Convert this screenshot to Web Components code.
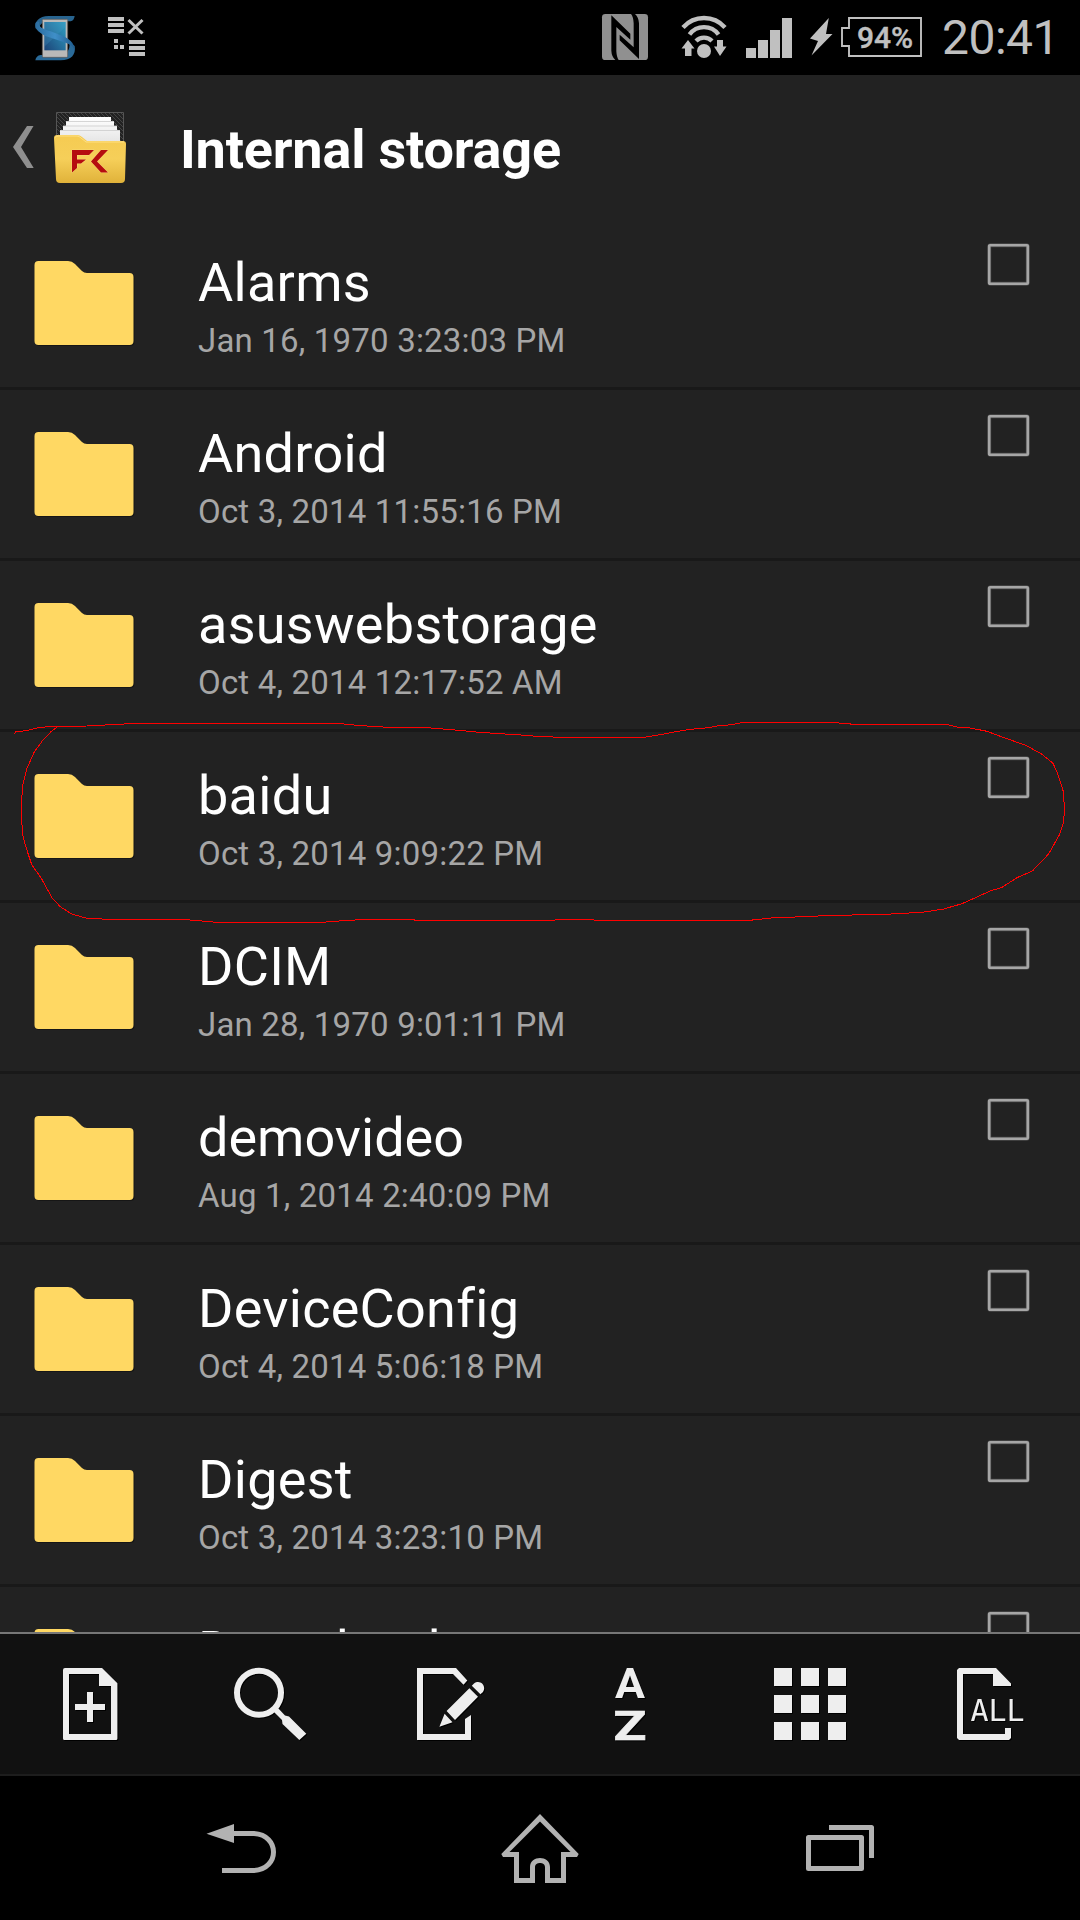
<!DOCTYPE html>
<html lang="en">
<head>
<meta charset="utf-8">
<title>Internal storage</title>
<style>
html, body { margin: 0; background: #000; }
body { width: 1080px; height: 1920px; overflow: hidden; font-family: Roboto, sans-serif; }
</style>
</head>
<body>
<file-manager-screen></file-manager-screen>
<script>
const define = (name, html, setup) => {
  const template = document.createElement('template');
  template.innerHTML = html;
  customElements.define(name, class extends HTMLElement {
    constructor() {
      super();
      this.attachShadow({ mode: 'open' }).append(template.content.cloneNode(true));
    }
    connectedCallback() { if (setup) setup(this, this.shadowRoot); }
  });
};

define('status-bar', `
<style>
:host { display: flex; height: 75px; background: #000; color: #c0c0c0; align-items: flex-start; }
svg { display: block; flex: none; }
.left { display: flex; padding: 10px 0 0 30px; }
.right { display: flex; margin-left: auto; padding-top: 8px; }
.battery { display: grid; width: 87px; height: 58px; margin-left: 6px; }
.battery > * { grid-area: 1 / 1; }
.battery span { margin: 15px 0 0 17px; font-size: 30px; font-weight: 500; line-height: 30px; white-space: nowrap; -webkit-text-stroke: .4px #c0c0c0; }
.clock { font-size: 48px; line-height: 60px; width: 153px; padding-left: 15px; box-sizing: border-box; white-space: nowrap; letter-spacing: -.5px; }
</style>
<div class="left">
<svg width="50" height="56" viewBox="0 0 150 168">
 <defs>
  <linearGradient id="b" x1="0" y1="0" x2="1" y2="0"><stop offset="0" stop-color="#2c6c9e"/><stop offset=".5" stop-color="#3f8fc8"/><stop offset="1" stop-color="#1e5a8c"/></linearGradient>
  <linearGradient id="s" x1="1" y1="0" x2="0" y2="1"><stop offset="0" stop-color="#2fa0c4"/><stop offset="1" stop-color="#1c4478"/></linearGradient>
 </defs>
 <path d="M134 18H56C26 18 14 36 16 54L28 66C24 46 36 34 60 34H122Q132 32 134 18Z" fill="#28648f"/>
 <path d="M16 151H92C124 151 138 134 134 108L118 96C122 122 108 135 86 135H32Q18 137 16 151Z" fill="#2a6a98"/>
 <rect x="37" y="28" width="76" height="114" rx="3" fill="#b9b9b9" stroke="#5c5450" stroke-width="2"/>
 <rect x="43" y="36" width="64" height="85" fill="url(#s)"/>
 <path d="M43 110L107 50V36H43Z" fill="#4a9cc8" opacity=".25"/>
 <path d="M16 44C18 62 32 72 58 82L100 96C124 104 136 112 134 132C136 104 126 90 98 78L62 64C38 56 24 52 28 36C18 34 16 38 16 44Z" fill="url(#b)"/>
</svg>
<svg width="80" height="56" viewBox="80 10 80 56" fill="#c0c0c0">
 <path d="M108 17h16v4h-16zM108 23h16v4h-16zM108 29h16v4h-16zM129 40h16v4h-16zM129 46h16v4h-16zM129 52h16v4h-16zM114 39h4v4h-4zM114 45h4v4h-4zM120 45h4v4h-4z"/>
 <path d="M128.500 20L142.500 33.500M142.500 20L128.500 33.500" stroke="#c0c0c0" stroke-width="3"/>
</svg>
</div>
<div class="right">
<svg width="58" height="58" viewBox="0 0 174 174">
 <rect x="18" y="18" width="138" height="138" rx="10" fill="#909090"/>
 <path d="M46 22L103 77V95L61 57V130Q62 148 68 156H58Q47 146 46 128Z"/>
 <path d="M129 153L71 97V80L113 118V46Q112 26 105 18H117Q128 28 129 46Z"/>
</svg>
<svg width="180" height="58" viewBox="654 8 180 58" fill="#c0c0c0">
 <g fill="none" stroke="#c0c0c0" stroke-width="4.300"><path d="M683 27.500A28 28 0 0 1 725 27.500M689.500 34.500A18 18 0 0 1 718.500 34.500M696 41A11 11 0 0 1 712 41"/></g>
 <circle cx="704" cy="51" r="7"/>
 <path d="M688 40L694.500 48.500H691.500V56H685V48.500H681.500ZM717 40H723V46.500H726.500L720 56L714 46.500H717Z"/>
 <path d="M746 48h10v10h-10zM758 40h10v18h-10zM770 30h10v28h-10zM782 18h10v40h-10z"/>
 <path d="M828.800 18L826 34H832.500L811.500 55.500L818 41L810 38.500Z"/>
</svg>
<div class="battery">
<svg width="87" height="58" viewBox="840 8 87 58"><path d="M849 18H921V56H849V46H842V28H849Z" fill="none" stroke="#c0c0c0" stroke-width="1.900"/></svg>
<span>94%</span></div>
<div class="clock">20:41</div>
</div>`);

define('title-bar', `
<style>
:host { display: flex; height: 144px; color: #fff; }
svg { display: block; flex: none; }
h1 { margin: 43px 0 0 42px; font-size: 54px; font-weight: 700; line-height: 64px; white-space: nowrap; letter-spacing: -.18px; }
</style>
<svg width="138" height="144" viewBox="0 75 138 144">
 <defs>
  <linearGradient id="f" x1="0" y1="0" x2="0" y2="1"><stop offset="0" stop-color="#f5cb52"/><stop offset=".5" stop-color="#f6cf59"/><stop offset="1" stop-color="#e0b23a"/></linearGradient>
  <linearGradient id="p" x1="0" y1="0" x2="0" y2="1"><stop offset="0" stop-color="#fff"/><stop offset="1" stop-color="#e2e2e2"/></linearGradient>
  <pattern id="w" width="4" height="4" patternUnits="userSpaceOnUse"><rect width="4" height="4" fill="#222"/><path d="M0 0L4 4" stroke="#444" stroke-width="1"/></pattern>
 </defs>
 <path d="M27 126H33.500L21 147L33.700 168H27L13 147Z" fill="#8f8f8f"/>
 <path d="M56.500 112.500H123.500V150H56.500Z" fill="url(#w)" stroke="#555"/>
 <path d="M69 117H111V121H114V126H117V130H120V145H60V130H63V126H66V121H69Z" fill="url(#p)"/>
 <path d="M66 121.500H114M63 126H117M60 130.500H120" stroke="#ccc" stroke-width=".8"/>
 <path d="M57 135H77Q80 135 82 137L87 141H123Q126 141 126 144L125 179Q125 183 121 183H60Q56 183 56 179L54 138Q54 135 57 135Z" fill="url(#f)"/>
 <path d="M55 137.500Q56 136 58 136H77Q79 136 81 138L86 142H124" fill="none" stroke="#ffe082" stroke-width="1"/>
 <path d="M72 150H94L89 155H77V159.500H86L81 163.500H77V168L72 172.500ZM101 150H108L97 161.500L108 172.500H101L91 161.500Z" fill="#b50d10" stroke="#f9dc7c" stroke-width=".8" paint-order="stroke"/>
</svg>
<h1><slot></slot></h1>`);

define('check-box', `
<style>
:host { display: block; width: 43px; height: 43px; }
svg { display: block; }
</style>
<svg width="43" height="43"><rect x="2.200" y="2.200" width="38.600" height="38.600" rx="1.500" fill="none" stroke="#666" stroke-width="4" opacity=".55"/><rect x="2.200" y="2.200" width="38.600" height="38.600" rx=".8" fill="none" stroke="#a6a6a6" stroke-width="2.600"/></svg>`);

define('file-row', `
<style>
:host { display: flex; height: 168px; flex: none; border-bottom: 3px solid #191919; }
.icon { flex: none; width: 104px; height: 90px; margin: 40px 0 0 32px; }
.text { display: flex; flex-direction: column; flex: 1; padding: 32px 0 0 62px; white-space: nowrap; }
.name { font-size: 54px; line-height: 64px; color: #fff; letter-spacing: .28px; }
:host([tight]) .name { letter-spacing: 0; }
.date { margin-top: 6px; font-size: 33px; line-height: 40px; color: #a6a6a6; letter-spacing: .19px; }
check-box { flex: none; margin: 23.500px 50px 0 0; }
</style>
<svg class="icon" viewBox="0 0 104 90">
 <path d="M6.500 2H36Q40 2 43 5L50 12Q52 14 55 14H97.500Q101.500 14 101.500 18V82Q101.500 86 97.500 86H6.500Q2.500 86 2.500 82V6Q2.500 2 6.500 2Z" fill="#111" opacity=".7" transform="translate(1 1)"/>
 <path d="M6.500 2H36Q40 2 43 5L50 12Q52 14 55 14H97.500Q101.500 14 101.500 18V82Q101.500 86 97.500 86H6.500Q2.500 86 2.500 82V6Q2.500 2 6.500 2Z" fill="#ffd863"/>
</svg>
<div class="text"><div class="name"></div><div class="date"></div></div>
<check-box></check-box>`, (host, root) => {
  root.querySelector('.name').textContent = host.getAttribute('name');
  root.querySelector('.date').textContent = host.getAttribute('date');
});

define('file-list', `
<style>
:host { display: flex; flex-direction: column; height: 1413px; overflow: hidden; position: relative; }
.mark { position: absolute; left: 0; top: 501px; pointer-events: none; }
</style>
<slot></slot>
<svg class="mark" width="1080" height="210" viewBox="0 720 1080 210" fill="none" stroke="#f00" stroke-width="1" shape-rendering="crispEdges">
<path d="M14.500 733.700L15.500 732L27.500 730.500L37 728L49 726.500L86.800 726L111 724.700L134 723.500H339.500L359 725.500L390.500 727.500L431 728L461.400 730.500L476 732L500 733.700L520.700 735L539 736.500L567 737.500H643.300L660 734.700L674.300 732L689.400 729.500L708 727.700L719 725.700L732 724.700L742.500 722.600H835L856 724.500H947L956.700 727L970.400 728L987 731.300L1001.400 736.700L1026.600 745.700L1042 754.300L1053 763.300L1057.600 773.300L1063.400 791.700L1064.500 810L1063.400 823.300L1059.300 835L1048.600 854L1032.400 871L1017 877.700L1001.400 887.700L991 890.700L962 903.700L943.600 909L922.200 912.300L882 914.500L834 915.300L795 917L770.700 918L748 920.500H643L564 919.700L540 920.500H465L363 919.500L339.500 921L319 922.500H219L190 920L109 919.300L87 918.300L71.600 914L60.300 906.700L52.300 898.300L41.300 878.300L31.700 864.700L25.800 846.700L22.400 833.300L21.300 810L22.400 786.700L26.900 768.300L34.400 751.700L43 740L51 731.700L56.800 727.300"/>
</svg>`);

define('tool-bar', `
<style>
:host { display: grid; grid-template-columns: repeat(6, 180px); height: 140px; border-top: 2px solid #777; border-bottom: 2px solid #1d1d1d; background: #111; }
svg { display: block; width: 76px; height: 76px; margin: 32px 0 0 52px; fill: #eee; overflow: visible; filter: drop-shadow(1px 1px 0 #000); }
text { font-family: Roboto, sans-serif; font-weight: 700; }
</style>
<svg viewBox="-2 -2 76 76"><path fill-rule="evenodd" d="M11 0H48L63.400 15.300V70.500Q63.400 72 62 72H10.500Q9 72 9 70.500V2Q9 0 11 0ZM15 6V66H57V18H45V6Z"/><path d="M33 24h6v12h12v6h-12v12h-6v-12h-12v-6h12z"/></svg>
<svg viewBox="-2 -2 76 76"><circle cx="25" cy="24.800" r="22" fill="none" stroke="#eee" stroke-width="6"/><path d="M43.500 39.500L51 47.500L55 48.500L72.300 65.700L65.300 72L48.500 56L48 52L39.500 43.500Z"/></svg>
<svg viewBox="-2 -2 76 76"><path d="M3 0H42L53.300 12.500L49.500 16.700L39 6H9V66H51V51L57 47V72H3Z"/><path d="M55.400 20.300L64 28.700L41 52L32.600 43ZM30.600 45.700L38.500 54.300L25.400 58.700ZM57.800 17.700L60 15.500C66 11 73 18 69 24L66.400 26.300Z"/></svg>
<svg viewBox="-2 -2 76 76"><text x="21" y="30" font-size="42" textLength="30" lengthAdjust="spacingAndGlyphs">A</text><text x="19.500" y="71.700" font-size="41.500" textLength="33" lengthAdjust="spacingAndGlyphs" stroke="#eee" stroke-width=".6">Z</text></svg>
<svg viewBox="-2 -2 76 76"><path d="M0 0h18v18H0zM27 0h18v18H27zM54 0h18v18H54zM0 27h18v18H0zM27 27h18v18H27zM54 27h18v18H54zM0 54h18v18H0zM27 54h18v18H27zM54 54h18v18H54z"/></svg>
<svg viewBox="-2 -2 76 76"><path d="M5 0H42L57 15.500V18H39V6H9V66H51V60H57V70L55 72H5L3 70V2Z"/><text x="16.500" y="53" font-size="30" style="font-family:'DejaVu Sans Mono',monospace;font-weight:400">ALL</text></svg>`);

define('nav-bar', `
<style>
:host { display: flex; height: 144px; padding: 0 60px; background: #000; }
svg { display: block; flex: none; width: 320px; height: 144px; fill: none; stroke: #b2b2b2; stroke-width: 5; }
</style>
<svg viewBox="60 1776 320 144"><path d="M234 1833.500H254C280 1835 280 1869 254 1870.500H222"/><path d="M206.500 1833.700L234 1824V1843Z" fill="#b2b2b2" stroke="none"/></svg>
<svg viewBox="380 1776 320 144"><path fill="#b2b2b2" stroke="none" fill-rule="evenodd" d="M540 1814L501.300 1854L503 1857H514V1883H535V1867C535 1861.500 545 1861.500 545 1867V1883H566V1857H577L578.700 1854ZM540 1821.500L509.500 1852H519V1878H530V1867C530 1855 550 1855 550 1867V1878H561V1852H570.500Z"/></svg>
<svg viewBox="700 1776 320 144"><path d="M808.500 1837.500H861.500V1868.500H808.500ZM829 1827.500H871.500V1858" stroke-linejoin="round"/></svg>`);

define('file-manager-screen', `
<style>
:host { display: flex; flex-direction: column; width: 1080px; height: 1920px; background: #222; }
</style>
<status-bar></status-bar>
<title-bar>Internal storage</title-bar>
<file-list>
<file-row name="Alarms" date="Jan 16, 1970 3:23:03 PM"></file-row>
<file-row name="Android" date="Oct 3, 2014 11:55:16 PM"></file-row>
<file-row name="asuswebstorage" date="Oct 4, 2014 12:17:52 AM"></file-row>
<file-row name="baidu" date="Oct 3, 2014 9:09:22 PM"></file-row>
<file-row name="DCIM" date="Jan 28, 1970 9:01:11 PM"></file-row>
<file-row tight name="demovideo" date="Aug 1, 2014 2:40:09 PM"></file-row>
<file-row name="DeviceConfig" date="Oct 4, 2014 5:06:18 PM"></file-row>
<file-row name="Digest" date="Oct 3, 2014 3:23:10 PM"></file-row>
<file-row name="Download" date=""></file-row>
</file-list>
<tool-bar></tool-bar>
<nav-bar></nav-bar>`);
</script>
</body>
</html>
